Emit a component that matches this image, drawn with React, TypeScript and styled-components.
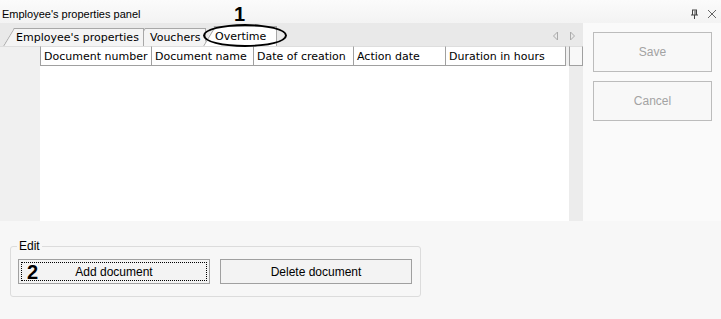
import React from "react";
import styled, { createGlobalStyle } from "styled-components";

const GlobalStyle = createGlobalStyle`
  html, body {
    margin: 0;
    padding: 0;
    background: #f7f7f7;
  }
  body {
    font-family: "DejaVu Sans", "Liberation Sans", sans-serif;
  }
`;

const columns = [
  { title: "Document number", width: 111 },
  { title: "Document name", width: 102 },
  { title: "Date of creation", width: 100 },
  { title: "Action date", width: 92 },
  { title: "Duration in hours", width: 120 },
];

const tabs = [
  { title: "Employee's properties", width: 141, offset: 0, pad: 13, active: false },
  { title: "Vouchers", width: 72, offset: -10, pad: 16, active: false },
  { title: "Overtime", width: 74, offset: -3, pad: 12, active: true },
];

export default function App() {
  return (
    <>
      <GlobalStyle />
      <Window>
        <TitleBar>
          <Title>Employee's properties panel</Title>
          <TitleIcons>
            <svg width="9" height="10" viewBox="0 0 9 10">
              <path d="M2 1h5M2.5 1v5M6.5 1v5M1 6h7M4.5 6v4" stroke="#444" strokeWidth="1" fill="none" />
              <path d="M5 1.5v4.5" stroke="#444" strokeWidth="1" />
            </svg>
            <svg width="10" height="10" viewBox="0 0 10 10">
              <path d="M1 1l8 8M9 1l-8 8" stroke="#666" strokeWidth="1" />
            </svg>
          </TitleIcons>
        </TitleBar>

        <Main>
          <LeftPanel>
            <TabStrip>
              {tabs.map((t, i) => (
                <Tab
                  key={t.title}
                  $active={t.active}
                  $offset={t.offset}
                  $pad={t.pad}
                  $layer={t.active ? 10 : tabs.length - i}
                  style={{ width: t.width }}
                >
                  {t.title}
                </Tab>
              ))}
              <TabArrows>
                <svg width="7" height="10" viewBox="0 0 7 10">
                  <path d="M5.5 1L1.5 5l4 4z" fill="none" stroke="#aaa" />
                </svg>
                <svg width="7" height="10" viewBox="0 0 7 10">
                  <path d="M1.5 1l4 4-4 4z" fill="none" stroke="#aaa" />
                </svg>
              </TabArrows>
              <Callout>
                <CalloutNumber>1</CalloutNumber>
                <Ellipse />
              </Callout>
            </TabStrip>

            <Grid>
              <GridBody>
                <HeaderRow>
                  <CornerCell />
                  {columns.map((c) => (
                    <HeaderCell key={c.title} style={{ width: c.width }}>
                      {c.title}
                    </HeaderCell>
                  ))}
                  <Filler />
                </HeaderRow>
                <Rows>
                  <RowHeaders />
                  <Cells />
                </Rows>
              </GridBody>
              <ScrollStrip>
                <ScrollTop />
              </ScrollStrip>
            </Grid>
          </LeftPanel>

          <RightPanel>
            <SideButton disabled>Save</SideButton>
            <SideButton disabled>Cancel</SideButton>
          </RightPanel>
        </Main>

        <Bottom>
          <GroupBox>
            <Legend>Edit</Legend>
            <ButtonRow>
              <ActionButton $focused>
                <StepNumber>2</StepNumber>
                Add document
              </ActionButton>
              <ActionButton>Delete document</ActionButton>
            </ButtonRow>
          </GroupBox>
        </Bottom>
      </Window>
    </>
  );
}

const Window = styled.div`
  width: 721px;
  height: 319px;
  display: flex;
  flex-direction: column;
  background: #f7f7f7;
  overflow: hidden;
`;

const TitleBar = styled.div`
  height: 23px;
  display: flex;
  align-items: center;
  justify-content: space-between;
  padding: 0 4px 0 2px;
  background: linear-gradient(#fbfbfb, #f3f3f3);
`;

const Title = styled.span`
  font-family: "Liberation Sans", Arial, sans-serif;
  font-size: 11px;
  color: #000;
  margin-top: 4px;
`;

const TitleIcons = styled.div`
  display: flex;
  align-items: center;
  gap: 8px;
  margin-top: 4px;
`;

const Main = styled.div`
  height: 198px;
  display: flex;
`;

const LeftPanel = styled.div`
  width: 583px;
  display: flex;
  flex-direction: column;
`;

const TabStrip = styled.div`
  position: relative;
  height: 23px;
  display: flex;
  align-items: flex-end;
  padding-left: 3px;
  background: #e9e9e9;
`;

const Tab = styled.div<{ $active?: boolean; $offset: number; $pad: number; $layer: number }>`
  position: relative;
  box-sizing: border-box;
  height: ${(p) => (p.$active ? 20 : 18)}px;
  margin-left: ${(p) => p.$offset}px;
  padding-left: ${(p) => p.$pad}px;
  display: flex;
  align-items: center;
  font-size: 11px;
  white-space: nowrap;
  color: #000;
  background: ${(p) => (p.$active ? "#fff" : "#f4f4f4")};
  border-top: 1px solid #a8a8a8;
  border-right: 1px solid #a8a8a8;
  z-index: ${(p) => p.$layer};
  clip-path: polygon(0 100%, 11px 0, 100% 0, 100% 100%);

  &::before {
    content: "";
    position: absolute;
    left: 0;
    bottom: 0;
    width: 1px;
    height: 22px;
    background: #a8a8a8;
    transform: rotate(31deg);
    transform-origin: bottom left;
  }
`;

const TabArrows = styled.div`
  position: absolute;
  right: 7px;
  top: 8px;
  display: flex;
  gap: 10px;
`;

const Callout = styled.div`
  position: absolute;
  left: 203px;
  top: -18px;
  width: 84px;
  height: 44px;
  z-index: 20;
  pointer-events: none;
`;

const CalloutNumber = styled.span`
  position: absolute;
  left: 31px;
  top: 0;
  font-family: "Liberation Sans", Arial, sans-serif;
  font-weight: bold;
  font-size: 20px;
  line-height: 19px;
  color: #000;
`;

const Ellipse = styled.div`
  position: absolute;
  left: 0;
  top: 19px;
  width: 80px;
  height: 19px;
  border: 2.5px solid #000;
  border-radius: 50%;
`;

const Grid = styled.div`
  flex: 1;
  display: flex;
`;

const GridBody = styled.div`
  width: 569px;
  display: flex;
  flex-direction: column;
`;

const HeaderRow = styled.div`
  height: 20px;
  display: flex;
  background: #fff;
`;

const CornerCell = styled.div`
  width: 40px;
  background: #f0f0f0;
  border-top: 1px solid #dedede;
  box-sizing: border-box;
`;

const HeaderCell = styled.div`
  box-sizing: border-box;
  height: 20px;
  padding-left: 3px;
  display: flex;
  align-items: center;
  font-size: 11px;
  color: #000;
  white-space: nowrap;
  overflow: hidden;
  background: #fff;
  border-left: 1px solid #a0a0a0;
  border-bottom: 1px solid #a0a0a0;
  border-top: 1px solid #dedede;
`;

const Filler = styled.div`
  flex: 1;
  border-left: 1px solid #a0a0a0;
  border-top: 1px solid #dedede;
  background: #f0f0f0;
`;

const Rows = styled.div`
  flex: 1;
  display: flex;
`;

const RowHeaders = styled.div`
  width: 40px;
  background: #f0f0f0;
`;

const Cells = styled.div`
  flex: 1;
  background: #fff;
`;

const ScrollStrip = styled.div`
  flex: 1;
  background: #ececec;
  display: flex;
  flex-direction: column;
`;

const ScrollTop = styled.div`
  height: 20px;
  box-sizing: border-box;
  background: #f8f8f8;
  border: 1px solid #a0a0a0;
  border-top-color: #dedede;
`;

const RightPanel = styled.div`
  flex: 1;
  display: flex;
  flex-direction: column;
  gap: 9px;
  padding: 9px 9px 0 10px;
  background: #fafafa;
`;

const SideButton = styled.button`
  height: 40px;
  width: 119px;
  border: 1px solid #bcbcbc;
  background: #f8f8f8;
  color: #a3a3a3;
  font-family: "Liberation Sans", Arial, sans-serif;
  font-size: 12px;
  padding: 0;
`;

const Bottom = styled.div`
  flex: 1;
  padding: 25px 0 0 10px;
  background: #f7f7f7;
`;

const GroupBox = styled.div`
  position: relative;
  box-sizing: border-box;
  width: 411px;
  height: 51px;
  border: 1px solid #dcdcdc;
  border-radius: 3px;
  padding: 12px 0 0 7px;
`;

const Legend = styled.span`
  position: absolute;
  left: 6px;
  top: -9px;
  padding: 0 2px;
  background: #f7f7f7;
  font-family: "Liberation Sans", Arial, sans-serif;
  font-size: 12px;
  line-height: 16px;
  color: #000;
`;

const ButtonRow = styled.div`
  display: flex;
  gap: 10px;
`;

const ActionButton = styled.button<{ $focused?: boolean }>`
  position: relative;
  width: 192px;
  height: 25px;
  box-sizing: border-box;
  border: 1px solid #a0a0a0;
  background: #f3f3f3;
  font-family: "Liberation Sans", Arial, sans-serif;
  font-size: 12px;
  color: #000;
  padding: 0;
  ${(p) =>
    p.$focused &&
    `
    outline: 1px dotted #000;
    outline-offset: -4px;
  `}
`;

const StepNumber = styled.span`
  position: absolute;
  left: 8px;
  top: 2px;
  font-weight: bold;
  font-size: 20px;
  line-height: 20px;
`;
